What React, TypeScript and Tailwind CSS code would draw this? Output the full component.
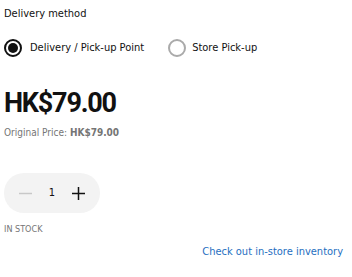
import React, { useState } from 'react';

const font = { fontFamily: '"DejaVu Sans Condensed", "DejaVu Sans", sans-serif' };
const priceFont = { fontFamily: 'Roboto, "Liberation Sans", sans-serif' };

export default function App() {
  const [method, setMethod] = useState<'delivery' | 'store'>('delivery');
  const [qty, setQty] = useState(1);

  return (
    <div className="w-[352px] h-[277px] bg-white text-[#111] px-1 pt-[6px]" style={font}>
      {/* Delivery method */}
      <p className="text-[11px] leading-[16px]">Delivery method</p>
      <div className="flex items-center gap-[24px] mt-[17px]">
        <button className="flex items-center gap-[8px]" onClick={() => setMethod('delivery')}>
          <span className={`w-[18px] h-[18px] rounded-full border-2 flex items-center justify-center ${method === 'delivery' ? 'border-[#111]' : 'border-[#aaa]'}`}>
            {method === 'delivery' && <span className="w-[10px] h-[10px] rounded-full bg-[#111]" />}
          </span>
          <span className="text-[11px] leading-[16px]">Delivery / Pick-up Point</span>
        </button>
        <button className="flex items-center gap-[6px]" onClick={() => setMethod('store')}>
          <span className={`w-[18px] h-[18px] rounded-full border-2 flex items-center justify-center ${method === 'store' ? 'border-[#111]' : 'border-[#aaa]'}`}>
            {method === 'store' && <span className="w-[10px] h-[10px] rounded-full bg-[#111]" />}
          </span>
          <span className="text-[11px] leading-[16px]">Store Pick-up</span>
        </button>
      </div>

      {/* Price */}
      <p className="mt-[30px] text-[27px] leading-[32px] font-bold tracking-[-1.2px]" style={priceFont}>HK$79.00</p>
      <p className="mt-[7px] text-[10px] leading-[14px] text-[#757575]">
        Original Price: <span className="font-bold">HK$79.00</span>
      </p>

      {/* Quantity */}
      <div className="mt-[33px] w-[96px] h-[40px] rounded-full bg-[#f3f3f3] flex items-center justify-between px-[15px]">
        <button className="text-[#c8c8c8]" onClick={() => setQty(Math.max(1, qty - 1))}>
          <svg width="13" height="13" viewBox="0 0 13 13"><path d="M0 6.5h13" stroke="currentColor" strokeWidth="1.5" /></svg>
        </button>
        <span className="text-[11px] leading-[16px] text-[#111]">{qty}</span>
        <button className="text-[#111]" onClick={() => setQty(qty + 1)}>
          <svg width="13" height="13" viewBox="0 0 13 13"><path d="M0 6.5h13M6.5 0v13" stroke="currentColor" strokeWidth="1.5" /></svg>
        </button>
      </div>
      <p className="mt-[10px] text-[9px] leading-[12px] text-[#757575]">IN STOCK</p>

      <div className="flex justify-end pr-[5px] mt-[9px]">
        <a href="#" className="text-[11px] leading-[16px] text-[#1f6fbf]">Check out in-store inventory</a>
      </div>
    </div>
  );
}
